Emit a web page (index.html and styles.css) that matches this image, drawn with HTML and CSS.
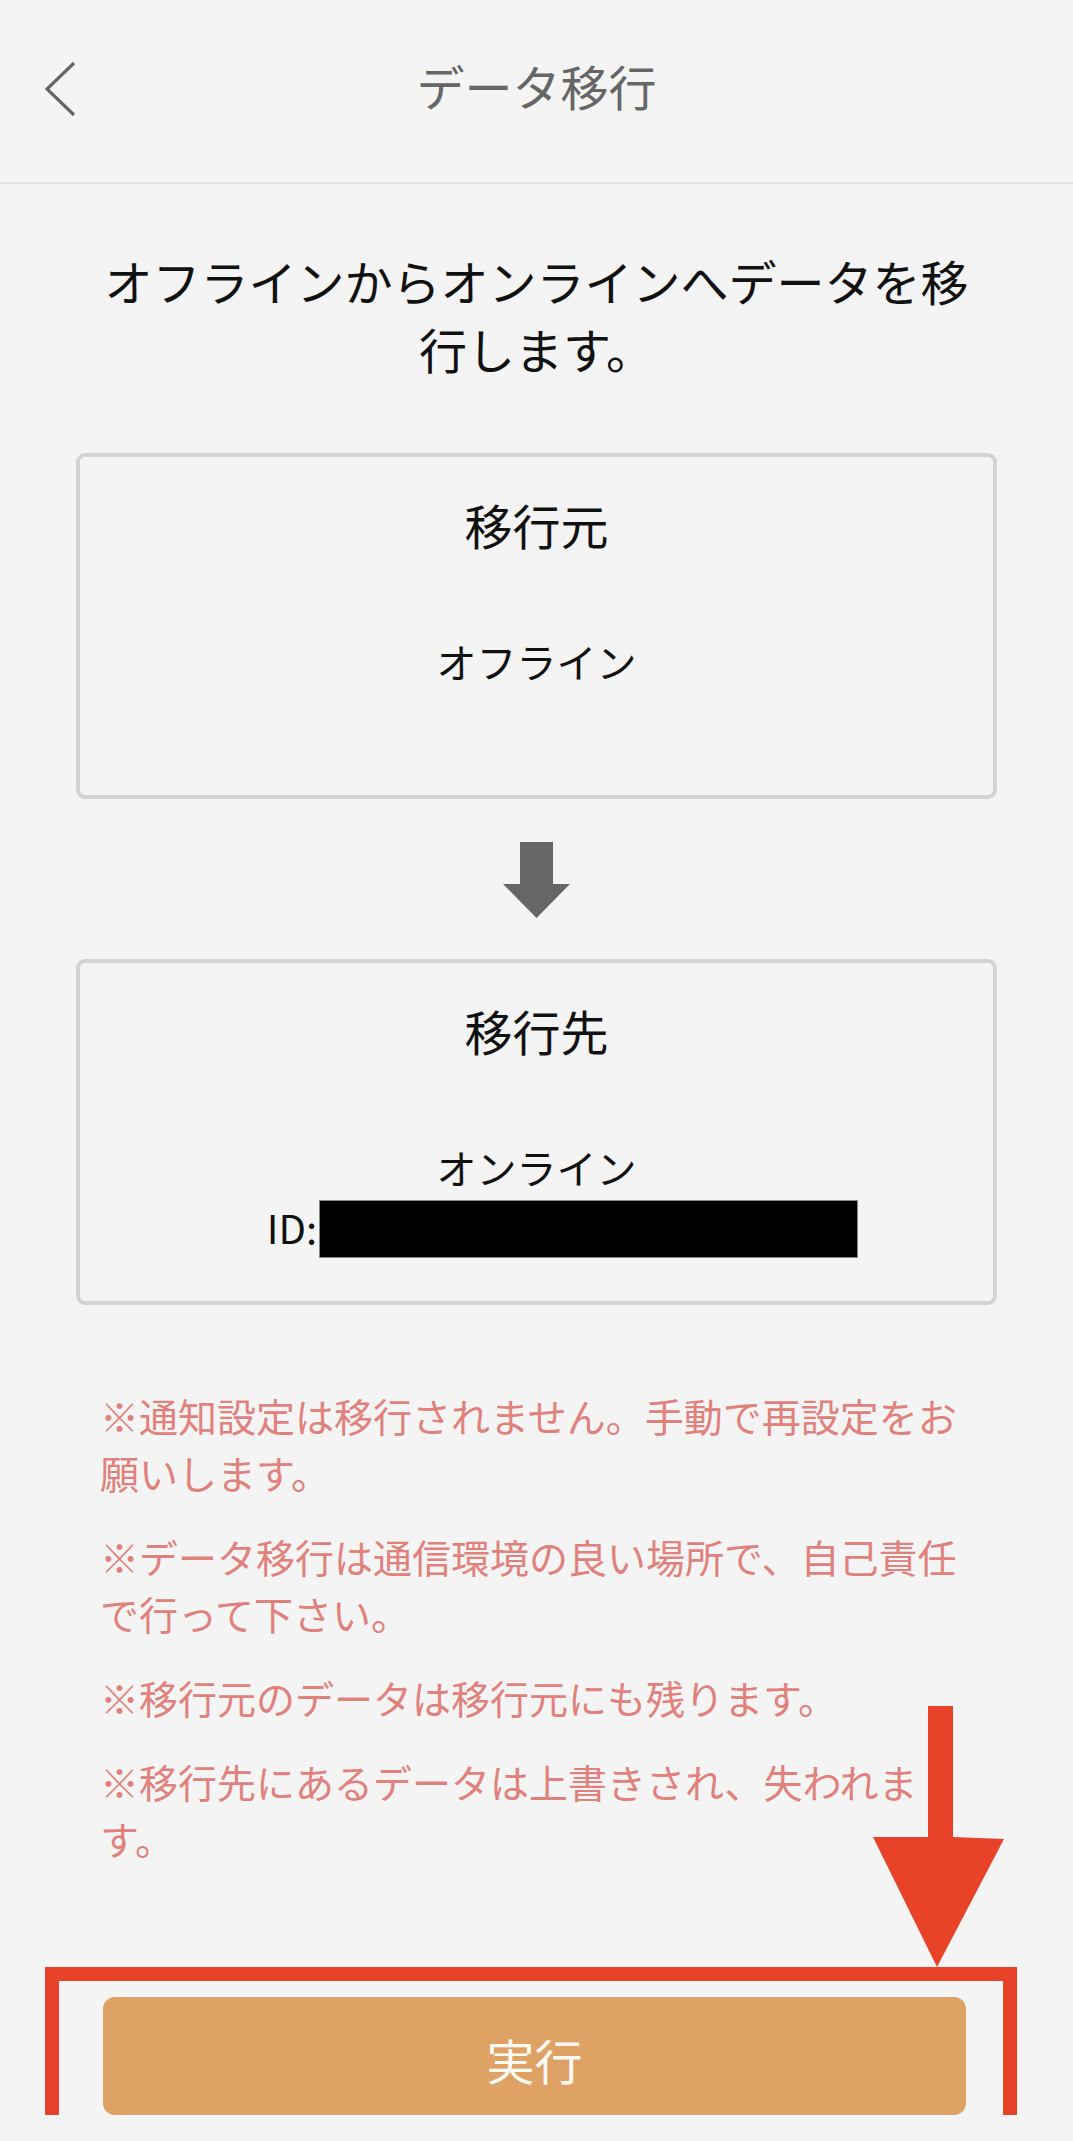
FILE: index.html
```html
<!DOCTYPE html>
<html lang="ja">
<head>
<meta charset="utf-8">
<title>データ移行</title>
<link rel="stylesheet" href="styles.css">
</head>
<body>
<header class="topbar">
  <div class="topbar-left">
    <svg class="back" width="32" height="56" viewBox="0 0 32 56" aria-hidden="true">
      <polyline points="29,2 2,28 29,54" fill="none" stroke="#666" stroke-width="3.2" stroke-linejoin="miter"/>
    </svg>
  </div>
  <h1 class="topbar-title">データ移行</h1>
  <div></div>
</header>

<main class="content">
  <p class="lead">オフラインからオンラインへデータを移行します。</p>

  <section class="card">
    <h2 class="card-title">移行元</h2>
    <p class="card-value">オフライン</p>
  </section>

  <div class="flow-arrow">
    <svg width="67" height="76" viewBox="0 0 67 76" aria-hidden="true">
      <polygon points="17,0 50,0 50,42 67,42 33.5,76 0,42 17,42" fill="#666"/>
    </svg>
  </div>

  <section class="card">
    <h2 class="card-title">移行先</h2>
    <p class="card-value">オンライン</p>
    <p class="card-value card-id">ID:<span class="redact"></span></p>
  </section>

  <div class="notes">
    <p>※通知設定は移行されません。手動で再設定をお願いします。</p>
    <p>※データ移行は通信環境の良い場所で、自己責任で行って下さい。</p>
    <p>※移行元のデータは移行元にも残ります。</p>
    <p>※移行先にあるデータは上書きされ、失われます。</p>
  </div>

  <div class="cta">
    <button class="run-btn" type="button">実行</button>
    <div class="mark-box"></div>
    <svg class="mark-arrow" width="131" height="264" viewBox="0 0 131 264" aria-hidden="true">
      <polygon points="55,2 80,2 80,133 131,135 64,263 0,133 55,133" fill="#e84229"/>
    </svg>
  </div>
</main>
</body>
</html>
```

FILE: styles.css
```css
html, body {
  margin: 0;
  padding: 0;
}

body {
  background: #f4f4f4;
  font-family: "Noto Sans CJK JP", "Noto Sans", sans-serif;
  color: #111;
}

.topbar {
  height: 182px;
  border-bottom: 2px solid #e2e2e2;
  display: grid;
  grid-template-columns: 1fr auto 1fr;
  align-items: center;
}

.topbar-left {
  padding-left: 45px;
  display: flex;
  align-items: center;
  padding-bottom: 4px;
}

.back {
  display: block;
}

.topbar-title {
  margin: 0;
  font-size: 48px;
  font-weight: 400;
  color: #666;
  line-height: 60px;
  padding-bottom: 12px;
}

.content {
  padding: 0 76px;
}

.lead {
  margin: 62px 0 0;
  padding: 0 24px;
  font-size: 48px;
  line-height: 68px;
  text-align: center;
}

.card {
  margin-top: 71px;
  height: 346px;
  box-sizing: border-box;
  border: 4px solid #d3d3d3;
  border-radius: 9px;
  padding-top: 33px;
  text-align: center;
}

.flow-arrow + .card {
  margin-top: 0;
}

.card-title {
  margin: 0 0 73px;
  font-size: 48px;
  font-weight: 400;
  line-height: 68px;
}

.card-value {
  margin: 0;
  font-size: 40px;
  line-height: 60px;
}

.card-id {
  padding-left: 52px;
}

.redact {
  display: inline-block;
  width: 537px;
  height: 56px;
  background: #000;
  border: 1px solid #888;
  vertical-align: -14px;
  margin-left: 2px;
}

.flow-arrow {
  display: flex;
  justify-content: center;
  margin: 43px 0 41px;
}

.flow-arrow svg {
  display: block;
}

.notes {
  margin-top: 82px;
  padding: 0 24px;
  color: #e0817c;
  font-size: 39px;
  line-height: 57px;
}

.notes p {
  margin: 0 0 27px;
}

.notes p:last-child {
  margin-bottom: 0;
}

.cta {
  position: relative;
  margin: 130px 0 0 27px;
  width: 863px;
}

.run-btn {
  display: block;
  width: 863px;
  height: 118px;
  margin: 0;
  border: none;
  border-radius: 12px;
  background: #dfa265;
  color: #fffaf4;
  font-family: "Noto Sans CJK JP", "Noto Sans", sans-serif;
  font-size: 48px;
  padding: 6px 0 0;
  cursor: pointer;
}

.mark-box {
  position: absolute;
  left: -58px;
  top: -30px;
  width: 972px;
  height: 166px;
  box-sizing: border-box;
  border: 14px solid #e84229;
  pointer-events: none;
}

.mark-arrow {
  position: absolute;
  left: 770px;
  top: -293px;
  display: block;
}
```
